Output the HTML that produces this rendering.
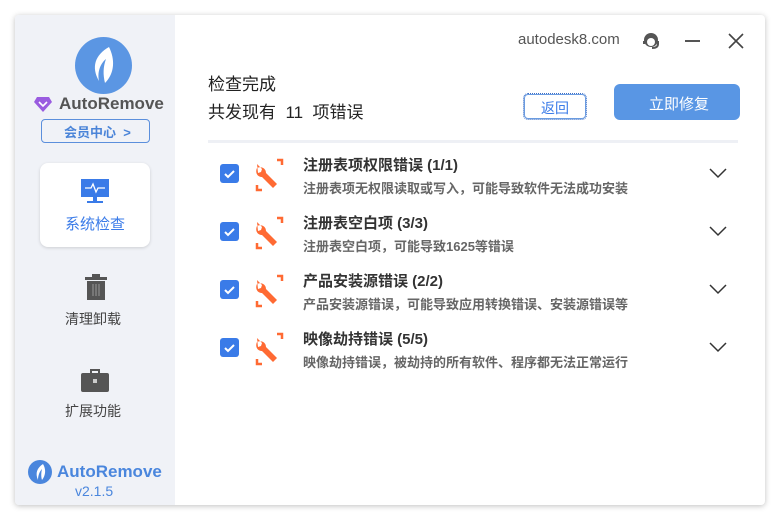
<!DOCTYPE html><html><head><meta charset="utf-8"><style>
*{margin:0;padding:0;box-sizing:border-box}
body{width:780px;height:520px;background:#fff;font-family:"Liberation Sans","Noto Sans CJK SC",sans-serif;position:relative;overflow:hidden}
.win{position:absolute;left:15px;top:15px;width:750px;height:490px;background:#fff;box-shadow:0 1px 6px rgba(0,0,0,.25);border-radius:4px;overflow:hidden}
.side{position:absolute;left:0;top:0;width:160px;height:490px;background:#f0f2f7}
.a{position:absolute}
.t{position:absolute;white-space:nowrap}
.cb{position:absolute;left:205px;width:19px;height:19px;background:#3a7be8;border-radius:3px}
.row .t1{font-size:15px;color:#333;font-weight:bold}
.sub{font-size:13px;color:#666;font-weight:bold}
</style></head><body><div class="win">
<div class="side">
<div class="a" style="left:60px;top:22px;width:57px;height:57px;border-radius:50%;background:#5b96e3"></div>
<svg class="a" style="left:60px;top:22px" width="57" height="57"><path d="M34 10 C20 18 16 30 24 44 C22 34 26 26 31 22 C28 30 28 38 30 46 C40 36 40 22 34 10Z" fill="#fff"/></svg>
<svg class="a" style="left:18px;top:80px" width="20" height="18"><path d="M4 2h12l3 5-9 10L1 7z" fill="#9a5ce0"/><path d="M6 7l4 4 4-4" stroke="#fff" stroke-width="1.6" fill="none"/></svg>
<div class="t" style="left:44px;top:79px;font-size:17px;font-weight:bold;color:#555">AutoRemove</div>
<div class="a" style="left:26px;top:104px;width:109px;height:24px;border:1px solid #5b8fdc;border-radius:4px"></div>
<div class="t" style="left:49px;top:107px;font-size:13px;font-weight:bold;color:#4a84d8">会员中心 &nbsp;&gt;</div>
<div class="a" style="left:25px;top:148px;width:110px;height:84px;background:#fff;border-radius:8px;box-shadow:0 1px 3px rgba(0,0,0,.15)"></div>
<svg class="a" style="left:65px;top:163px" width="30" height="26"><rect x="1" y="1" width="28" height="18" fill="#3a7be8"/><path d="M5 10h6l2-4 3 8 2-4h7" stroke="#fff" stroke-width="1.3" fill="none"/><rect x="13" y="19" width="4" height="4" fill="#3a7be8"/><rect x="7" y="23" width="16" height="2" fill="#3a7be8"/></svg>
<div class="t" style="left:50px;top:198px;font-size:15px;color:#3a7be8">系统检查</div>
<svg class="a" style="left:69px;top:259px" width="24" height="26"><rect x="1" y="3" width="22" height="3" fill="#555"/><rect x="8" y="0" width="8" height="3" fill="#555"/><rect x="3" y="7" width="18" height="19" fill="#555"/><path d="M9 10v12M12 10v12M15 10v12" stroke="#999" stroke-width="1"/></svg>
<div class="t" style="left:50px;top:294px;font-size:14px;color:#444">清理卸载</div>
<svg class="a" style="left:66px;top:353px" width="28" height="24"><path d="M10 5V2h8v3" stroke="#555" stroke-width="2" fill="none"/><rect x="0" y="5" width="28" height="19" rx="2" fill="#555"/><rect x="12" y="11" width="4" height="4" fill="#ccc"/></svg>
<div class="t" style="left:50px;top:386px;font-size:14px;color:#444">扩展功能</div>
<div class="a" style="left:13px;top:445px;width:24px;height:24px;border-radius:50%;background:#4a86dd"></div>
<svg class="a" style="left:13px;top:445px" width="24" height="24"><path d="M15 4C9 8 7 13 10 20C10 15 12 11 14 9C13 13 13 17 14 20C18 15 18 9 15 4Z" fill="#fff"/></svg>
<div class="t" style="left:42px;top:447px;font-size:17px;font-weight:bold;color:#4a86dd">AutoRemove</div>
<div class="t" style="left:60px;top:468px;font-size:14px;color:#4a86dd">v2.1.5</div>
</div>
<div class="t" style="left:503px;top:16px;font-size:15px;color:#555">autodesk8.com</div>
<svg class="a" style="left:626px;top:16px" width="20" height="20"><circle cx="10" cy="9" r="7" fill="#555"/><circle cx="10" cy="11" r="4" fill="#fff"/><path d="M3 10v3M17 10v3Q17 17 11 17" stroke="#555" stroke-width="2" fill="none"/></svg>
<div class="a" style="left:670px;top:25px;width:15px;height:2px;background:#555"></div>
<svg class="a" style="left:713px;top:18px" width="16" height="16"><path d="M1 1L15 15M15 1L1 15" stroke="#444" stroke-width="1.6"/></svg>
<div class="t" style="left:193px;top:55px;font-size:17px;color:#222">检查完成</div>
<div class="t" style="left:193px;top:83px;font-size:17px;color:#222">共发现有&nbsp; 11 &nbsp;项错误</div>
<div class="a" style="left:508px;top:78px;width:64px;height:27px;border:1px dotted #3a6ec8;border-radius:5px;box-shadow:inset 0 0 0 1px #6a9be0"></div>
<div class="t" style="left:526px;top:83px;font-size:14px;color:#3a7be8">返回</div>
<div class="a" style="left:599px;top:69px;width:126px;height:36px;background:#5996e4;border-radius:6px"></div>
<div class="t" style="left:634px;top:78px;font-size:15px;color:#fff">立即修复</div>
<div class="a" style="left:193px;top:125px;width:530px;height:3px;background:#eef0f5"></div>
<div class="cb" style="top:149px"></div><div class="cb" style="top:207px"></div><div class="cb" style="top:265px"></div><div class="cb" style="top:323px"></div>
<svg class="a" style="left:205px;top:149px" width="19" height="200"><g stroke="#fff" stroke-width="2" fill="none"><path d="M5 10l3 3 6-6"/><path d="M5 68l3 3 6-6"/><path d="M5 126l3 3 6-6"/><path d="M5 184l3 3 6-6"/></g></svg>
<svg class="a" style="left:238px;top:143px" width="36" height="240"><defs><g id="w"><path d="M4 6l5 5-1 3-4-4c-2 4 0 9 5 9l11 11 4-4-11-11c0-5-5-7-9-5l4 4-3 1z" fill="#ff6a33"/><path d="M24 2h5v5M4 27v5h5" stroke="#ff6a33" stroke-width="2.5" fill="none"/></g></defs><use href="#w"/><use href="#w" y="58"/><use href="#w" y="116"/><use href="#w" y="174"/></svg>
<div class="t row" style="left:288px;top:139px"><span class="t1">注册表项权限错误 (1/1)</span></div><div class="t sub" style="left:288px;top:163px">注册表项无权限读取或写入，可能导致软件无法成功安装</div>
<div class="t row" style="left:288px;top:197px"><span class="t1">注册表空白项 (3/3)</span></div><div class="t sub" style="left:288px;top:221px">注册表空白项，可能导致1625等错误</div>
<div class="t row" style="left:288px;top:255px"><span class="t1">产品安装源错误 (2/2)</span></div><div class="t sub" style="left:288px;top:279px">产品安装源错误，可能导致应用转换错误、安装源错误等</div>
<div class="t row" style="left:288px;top:313px"><span class="t1">映像劫持错误 (5/5)</span></div><div class="t sub" style="left:288px;top:337px">映像劫持错误，被劫持的所有软件、程序都无法正常运行</div>
<svg class="a" style="left:693px;top:152px" width="20" height="200"><g stroke="#333" stroke-width="1.5" fill="none"><path d="M2 2l8 8 8-8"/><path d="M2 60l8 8 8-8"/><path d="M2 118l8 8 8-8"/><path d="M2 176l8 8 8-8"/></g></svg>
</div></body></html>
